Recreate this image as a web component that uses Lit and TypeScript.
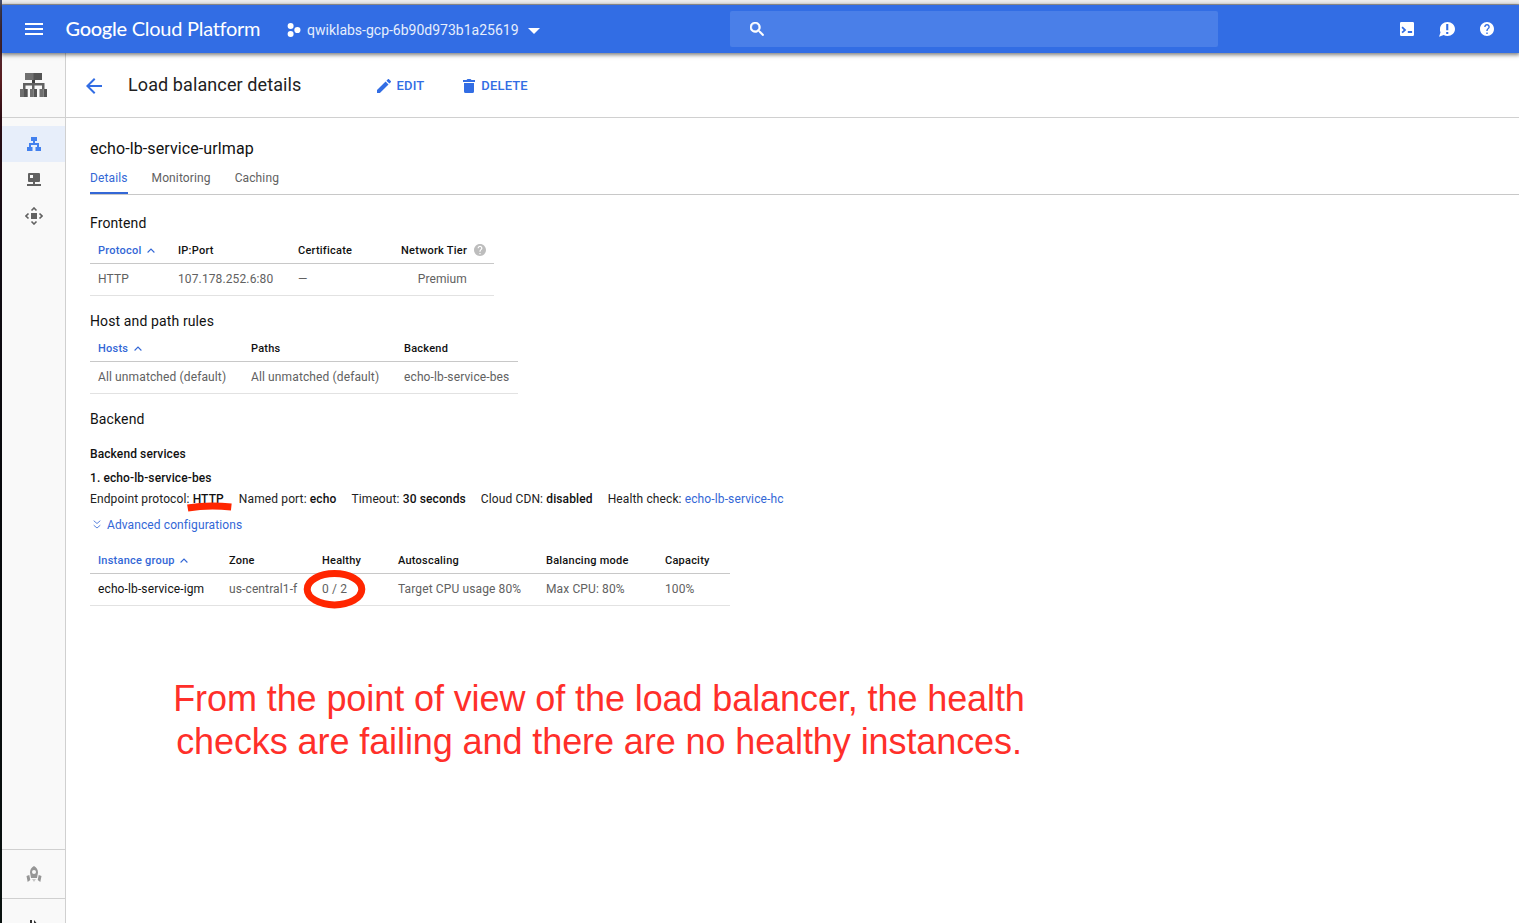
import { LitElement, html, css, svg } from "lit";
import { customElement, property } from "lit/decorators.js";

const icons: Record<string, { box: string; art: unknown }> = {
  menu: { box: "0 0 18 12", art: svg`<path d="M0 0h18v2H0zM0 5h18v2H0zM0 10h18v2H0z"/>` },
  project: { box: "0 0 14 14", art: svg`<circle cx="3.6" cy="3" r="3"/><circle cx="10.4" cy="7" r="3.100"/><circle cx="3.6" cy="11" r="3"/>` },
  caret: { box: "0 0 12 6", art: svg`<path d="M0 0h12L6 6z"/>` },
  search: { box: "3 3 17.5 17.5", art: svg`<path d="M15.5 14h-.79l-.28-.27C15.41 12.59 16 11.11 16 9.5 16 5.91 13.09 3 9.5 3S3 5.91 3 9.5 5.91 16 9.5 16c1.61 0 3.09-.59 4.23-1.57l.27.28v.79l5 4.99L20.49 19l-4.99-5zm-6 0C7.01 14 5 11.99 5 9.5S7.01 5 9.5 5 14 7.01 14 9.5 11.99 14 9.5 14z" stroke="currentColor" stroke-width=".8"/>` },
  shell: { box: "0 0 14 14", art: svg`<path fill-rule="evenodd" d="M1.2 0h11.6A1.2 1.2 0 0 1 14 1.200v11.600A1.200 1.200 0 0 1 12.800 14H1.200A1.200 1.200 0 0 1 0 12.800V1.200A1.200 1.200 0 0 1 1.200 0zM1.500 5.700l2.200 2.200-2.200 2.200 1.200 1.200 3.600-3.400-3.600-3.400zM7.800 9.100v1.800h4.300V9.100z"/>` },
  feedback: { box: "0 0 16 15", art: svg`<path fill-rule="evenodd" d="M8.500 0C12.600 0 16 3.100 16 7s-3.400 7-7.500 7c-1.400 0-2.700-.3-3.800-.9L0 14.800l1.500-4.200A6.700 6.700 0 0 1 1 7c0-3.900 3.400-7 7.500-7zM7.200 2v6.300h2.100V2zM7.200 9.900v2h2.100v-2z"/>` },
  help: { box: "2 2 20 20", art: svg`<path d="M12 2C6.480 2 2 6.480 2 12s4.480 10 10 10 10-4.480 10-10S17.520 2 12 2zm1 17h-2v-2h2v2zm2.070-7.750l-.9.920C13.450 12.900 13 13.500 13 15h-2v-.500c0-1.100.450-2.100 1.170-2.830l1.240-1.260c.370-.360.590-.860.590-1.410 0-1.100-.900-2-2-2s-2 .900-2 2H8c0-2.210 1.790-4 4-4s4 1.790 4 4c0 .880-.360 1.680-.930 2.250z"/>` },
  back: { box: "4 4 16 16", art: svg`<path d="M20 11H7.830l5.590-5.590L12 4l-8 8 8 8 1.410-1.410L7.830 13H20v-2z"/>` },
  edit: { box: "3 3 18 18", art: svg`<path d="M3 17.250V21h3.750L17.810 9.940l-3.750-3.750L3 17.250zM20.710 7.040c.390-.390.390-1.020 0-1.410l-2.340-2.340c-.390-.390-1.020-.390-1.410 0l-1.830 1.830 3.750 3.750 1.830-1.830z"/>` },
  trash: { box: "0 0 12 14", art: svg`<path d="M0 1h3.500l1-1h3l1 1H12v2H0zM1 4h10v8.500A1.500 1.500 0 0 1 9.500 14h-7A1.500 1.500 0 0 1 1 12.500z"/>` },
  network: { box: "0 0 27 24", art: svg`<path fill="#424242" d="M12 7h3v3h-3z"/><path fill="#616161" d="M3 10h21.500v6H22v-3.500h-7.500V16H12v-3.500H5.500V16H3z"/><path fill="#707070" d="M5 0h9v7H5zM0 16h4v8H0zM10 16h3.500v8H10zM19.500 16h4v8h-4z"/><path fill="#545454" d="M13.500 0H22v7h-8.500zM4 16h3.700v8H4zM13.500 16H17v8h-3.500zM23.500 16H27v8h-3.500z"/>` },
  tree: { box: "0 0 14 14", art: svg`<path d="M4 0h6v4H8v2h4v4h2v4H8.500v-4H10V8H4v2h1.500v4H0v-4h2V6h4V4H4z"/>` },
  monitor: { box: "0 0 14 13", art: svg`<path fill-rule="evenodd" d="M2 0h10a1 1 0 0 1 1 1v7a1 1 0 0 1-1 1H8v2h6v2H0v-2h6V9H2a1 1 0 0 1-1-1V1a1 1 0 0 1 1-1zM3 2v3h3V2z"/>` },
  target: { box: "0 0 18 18", art: svg`<path d="M6 6h6v6H6z"/><path fill="none" stroke="currentColor" stroke-width="1.600" d="M6.500 3.500L9 1l2.500 2.500M6.500 14.500L9 17l2.500-2.500M3.500 6.500L1 9l2.500 2.500M14.500 6.500L17 9l-2.500 2.500"/>` },
  rocket: { box: "0 0 16 16", art: svg`<path fill-rule="evenodd" d="M8 0c2.700 1.500 4 3.700 4 6.500L11 12H5L4 6.500C4 3.700 5.300 1.500 8 0zM8 4a2 2 0 1 0 0 4 2 2 0 0 0 0-4z"/><path d="M3.300 9l1 5-2.600 2L.5 10zM12.700 9l-1 5 2.600 2 1.200-6z"/><path opacity=".5" d="M6 13h4l-2 3z"/>` },
  expand: { box: "0 0 10 12", art: svg`<path d="M1 0h2v12H1zM5 0l5 6-5 6z"/>` },
  up: { box: "0 0 8 5", art: svg`<path fill="none" stroke="currentColor" stroke-width="1.100" d="M.6 4.500L4 1l3.400 3.500"/>` },
  down2: { box: "0 0 8 9", art: svg`<path fill="none" stroke="currentColor" stroke-width="1" d="M.7.700L4 3.500 7.300.700M.7 5.200L4 8l3.300-2.800"/>` },
};

@customElement("ui-icon")
class UiIcon extends LitElement {
  @property() name = "menu";
  static styles = css`
    :host { display: block; flex: none; }
    svg { display: block; width: 100%; height: 100%; fill: currentColor; }
  `;
  render() {
    const i = icons[this.name];
    return html`<svg viewBox=${i.box}>${i.art}</svg>`;
  }
}

interface Column { label: string; width: number; sorted?: boolean; help?: boolean; strong?: boolean }

@customElement("data-table")
class DataTable extends LitElement {
  @property({ attribute: false }) columns: Column[] = [];
  @property({ attribute: false }) cells: string[] = [];
  static styles = css`
    :host { display: block; }
    .row { display: grid; width: max-content; box-sizing: border-box; white-space: nowrap; align-items: center; }
    .head { height: 27px; border-bottom: 1px solid #c8c8c8; font-size: 11px; font-weight: 500; letter-spacing: 0.23px; color: #111; }
    .body { height: 32px; border-bottom: 1px solid #e2e2e2; padding-bottom: 1px; font-size: 12px; letter-spacing: 0.12px; color: #616161; }
    .cell { display: flex; align-items: center; padding: 0 8px; }
    .sorted { color: #3367d6; }
    .body .strong { color: #111; }
    .tier { justify-content: flex-end; }
    .body .tier { padding-right: 27px; }
    .up { width: 8px; height: 5px; margin-left: 5.5px; }
    .help { width: 12px; height: 12px; margin-left: 7px; color: #bdbdbd; }
  `;
  render() {
    const grid = "grid-template-columns:" + this.columns.map((c) => c.width + "px").join(" ");
    return html`
      <div class="row head" style=${grid}>
        ${this.columns.map((c) => html`<div class="cell ${c.sorted ? "sorted" : ""} ${c.help ? "tier" : ""}">${c.label}${c.sorted ? html`<ui-icon class="up" name="up"></ui-icon>` : ""}${c.help ? html`<ui-icon class="help" name="help"></ui-icon>` : ""}</div>`)}
      </div>
      <div class="row body" style=${grid}>
        ${this.columns.map((c, i) => html`<div class="cell ${c.strong ? "strong" : ""} ${c.help ? "tier" : ""}">${this.cells[i]}</div>`)}
      </div>`;
  }
}

@customElement("app-root")
class AppRoot extends LitElement {
  static styles = css`
    :host { display: block; position: relative; width: 1519px; height: 923px; overflow: hidden; background: #fff; font-family: Roboto, sans-serif; color: #212121; }
    .window { display: flex; height: 923px; }
    .desktop { width: 2px; flex: none; background: linear-gradient(#46506e 0, #4c2f3d 30px, #5a1d20 80px, #2a0c14 120px, #120c14 230px, #07090c 500px, #0a1210 923px); }
    .browser { flex: 1; display: flex; flex-direction: column; min-width: 0; }
    .chrome { height: 4px; background: #eee; border-bottom: 1px solid #a8a8a8; flex: none; }
    .bar { height: 48px; flex: none; display: flex; align-items: center; background: #326de4; color: #fff; box-shadow: 0 1px 4px 1px rgba(0, 0, 0, 0.5); z-index: 1; }
    .menu { width: 18px; height: 12px; margin-left: 23px; }
    .brand { font-family: Lato, sans-serif; font-size: 20px; letter-spacing: -0.27px; width: 195px; margin-left: 22.5px; margin-bottom: 2px; white-space: nowrap; line-height: 24px; }
    .google { font-weight: 500; }
    .project { width: 14px; height: 14px; margin-left: 26.5px; margin-top: 2px; }
    .project-name { font-size: 14px; width: 212px; margin-left: 6px; margin-top: 2px; letter-spacing: 0; color: #e6eefc; white-space: nowrap; }
    .caret { width: 12px; height: 6px; margin-left: 9px; margin-top: 4px; }
    .search { width: 488px; height: 36px; margin-left: 190px; border-radius: 2px; background: #4a7fe8; display: flex; align-items: center; }
    .glass { width: 14px; height: 14px; margin-left: 20px; margin-bottom: 1px; }
    .tools { margin-left: auto; margin-right: 25px; display: flex; align-items: center; }
    .shell { width: 14px; height: 14px; }
    .feedback { width: 16px; height: 15px; margin-left: 25px; }
    .assist { width: 14px; height: 14px; margin-left: 25px; }
    .page { flex: 1; display: flex; min-height: 0; }
    .rail { width: 63px; flex: none; display: flex; flex-direction: column; background: #f9f9f9; border-right: 1px solid #d0d0d0; color: #616161; }
    .product { height: 64px; border-bottom: 1px solid #d0d0d0; margin-bottom: 8px; display: flex; align-items: center; justify-content: center; }
    .network { width: 27px; height: 24px; }
    .item { height: 36px; display: flex; align-items: center; justify-content: center; padding-left: 1px; }
    .active { background: #e7eefa; color: #4280ee; }
    .tree { width: 14px; height: 14px; }
    .monitor { width: 14px; height: 13px; margin-bottom: 1px; }
    .target { width: 18px; height: 18px; }
    .launch { margin-top: auto; height: 48px; border-top: 1px solid #d0d0d0; border-bottom: 1px solid #d0d0d0; display: flex; align-items: center; justify-content: center; color: #969696; }
    .rocket { width: 16px; height: 16px; margin-left: 1px; }
    .fold { height: 24px; overflow: hidden; color: #333; }
    .expand { width: 10px; height: 12px; margin: 21px 0 0 27px; }
    .main { flex: 1; min-width: 0; }
    .title-bar { height: 64px; border-bottom: 1px solid #d0d0d0; display: flex; align-items: center; color: #326de4; }
    .back { width: 16px; height: 16px; margin: 2px 0 0 20px; }
    .title { width: 174px; margin-left: 26px; margin-bottom: 1px; font-size: 18px; color: #212121; white-space: nowrap; letter-spacing: 0.1px; }
    .edit { width: 14px; height: 14px; margin-left: 75px; margin-top: 2px; }
    .action { font-size: 13px; font-weight: 500; margin-left: 5.5px; margin-top: 1px; letter-spacing: 0.15px; }
    .trash { width: 12px; height: 14px; margin-left: 38.5px; margin-top: 1px; }
    .trash + .action { margin-left: 6.5px; }
    .content { padding-left: 24px; }
    .name { padding-top: 19px; font-size: 16px; line-height: 24px; color: #111; letter-spacing: 0.1px; }
    .tabs { display: flex; gap: 24px; height: 33px; border-bottom: 1px solid #c8c8c8; font-size: 12px; letter-spacing: 0.12px; color: #616161; line-height: 34px; }
    .tab { height: 31px; }
    .current { color: #3367d6; border-bottom: 2px solid #3367d6; }
    .heading { font-size: 14px; line-height: 20px; color: #111; letter-spacing: 0.12px; }
    .first { margin-top: 18px; }
    .gap { margin-top: 15px; }
    .heading + data-table { margin-top: 4px; }
    .sub { margin-top: 16px; font-size: 12px; line-height: 18px; font-weight: 500; color: #111; letter-spacing: 0.1px; }
    .sub + .sub { margin-top: 6px; }
    .facts { display: flex; gap: 15px; font-size: 12px; line-height: 18px; margin-top: 3px; letter-spacing: 0.12px; white-space: nowrap; }
    .facts b { font-weight: 500; color: #111; }
    .link { color: #3367d6; }
    .advanced { display: flex; align-items: center; color: #3367d6; font-size: 12px; line-height: 18px; margin: 8px 0 13px 3px; letter-spacing: 0.1px; }
    .down2 { width: 8px; height: 9px; margin-right: 6px; margin-bottom: 1px; opacity: 0.8; }
    .marks { position: absolute; left: 0; top: 0; width: 1519px; height: 923px; }
    .note { position: absolute; left: 173px; top: 677px; width: 852px; text-align: center; font: 36px/43px "Liberation Sans", sans-serif; letter-spacing: -0.09px; color: #ff2f2a; white-space: nowrap; }
  `;
  render() {
    return html`
      <div class="window">
        <div class="desktop"></div>
        <div class="browser">
          <div class="chrome"></div>
          <header class="bar">
            <ui-icon class="menu" name="menu"></ui-icon>
            <div class="brand"><span class="google">Google</span> Cloud Platform</div>
            <ui-icon class="project" name="project"></ui-icon>
            <div class="project-name">qwiklabs-gcp-6b90d973b1a25619</div>
            <ui-icon class="caret" name="caret"></ui-icon>
            <div class="search"><ui-icon class="glass" name="search"></ui-icon></div>
            <div class="tools">
              <ui-icon class="shell" name="shell"></ui-icon>
              <ui-icon class="feedback" name="feedback"></ui-icon>
              <ui-icon class="assist" name="help"></ui-icon>
            </div>
          </header>
          <div class="page">
            <nav class="rail">
              <div class="product"><ui-icon class="network" name="network"></ui-icon></div>
              <div class="item active"><ui-icon class="tree" name="tree"></ui-icon></div>
              <div class="item"><ui-icon class="monitor" name="monitor"></ui-icon></div>
              <div class="item"><ui-icon class="target" name="target"></ui-icon></div>
              <div class="launch"><ui-icon class="rocket" name="rocket"></ui-icon></div>
              <div class="fold"><ui-icon class="expand" name="expand"></ui-icon></div>
            </nav>
            <main class="main">
              <div class="title-bar">
                <ui-icon class="back" name="back"></ui-icon>
                <div class="title">Load balancer details</div>
                <ui-icon class="edit" name="edit"></ui-icon><div class="action">EDIT</div>
                <ui-icon class="trash" name="trash"></ui-icon><div class="action">DELETE</div>
              </div>
              <div class="content">
                <div class="name">echo-lb-service-urlmap</div>
                <div class="tabs">
                  <div class="tab current">Details</div>
                  <div class="tab">Monitoring</div>
                  <div class="tab">Caching</div>
                </div>
                <div class="heading first">Frontend</div>
                <data-table
                  .columns=${[{ label: "Protocol", width: 80, sorted: true }, { label: "IP:Port", width: 120 }, { label: "Certificate", width: 103 }, { label: "Network Tier", width: 101, help: true }]}
                  .cells=${["HTTP", "107.178.252.6:80", "—", "Premium"]}></data-table>
                <div class="heading gap">Host and path rules</div>
                <data-table
                  .columns=${[{ label: "Hosts", width: 153, sorted: true }, { label: "Paths", width: 153 }, { label: "Backend", width: 122 }]}
                  .cells=${["All unmatched (default)", "All unmatched (default)", "echo-lb-service-bes"]}></data-table>
                <div class="heading gap">Backend</div>
                <div class="sub">Backend services</div>
                <div class="sub">1. echo-lb-service-bes</div>
                <div class="facts">
                  <span>Endpoint protocol: <b>HTTP</b></span>
                  <span>Named port: <b>echo</b></span>
                  <span>Timeout: <b>30 seconds</b></span>
                  <span>Cloud CDN: <b>disabled</b></span>
                  <span>Health check: <span class="link">echo-lb-service-hc</span></span>
                </div>
                <div class="advanced"><ui-icon class="down2" name="down2"></ui-icon>Advanced configurations</div>
                <data-table
                  .columns=${[{ label: "Instance group", width: 131, sorted: true, strong: true }, { label: "Zone", width: 93 }, { label: "Healthy", width: 76 }, { label: "Autoscaling", width: 148 }, { label: "Balancing mode", width: 119 }, { label: "Capacity", width: 73 }]}
                  .cells=${["echo-lb-service-igm", "us-central1-f", "0 / 2", "Target CPU usage 80%", "Max CPU: 80%", "100%"]}></data-table>
              </div>
            </main>
          </div>
        </div>
      </div>
      <svg class="marks" viewBox="0 0 1519 923" fill="none" stroke="#ff2600" stroke-width="7">
        <path d="M187.700 508Q208 504.500 231.300 507"/>
        <ellipse cx="334.500" cy="589.200" rx="27.300" ry="15.700"/>
      </svg>
      <div class="note">From the point of view of the load balancer, the health<br>checks are failing and there are no healthy instances.</div>
    `;
  }
}
